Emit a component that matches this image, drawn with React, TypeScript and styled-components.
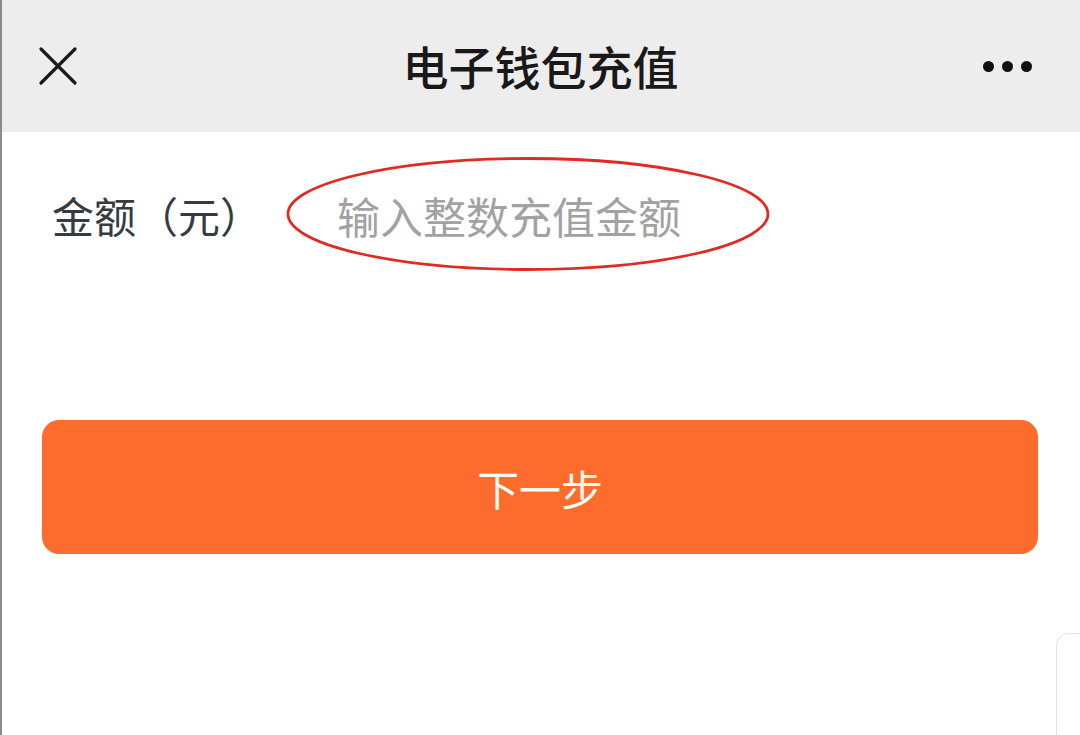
import React from "react";
import styled, { createGlobalStyle } from "styled-components";

const GlobalStyle = createGlobalStyle`
  html, body {
    margin: 0;
    padding: 0;
    background: #ffffff;
  }
  body {
    font-family: "Noto Sans CJK SC", "Noto Sans", sans-serif;
  }
  * { box-sizing: border-box; }
`;

const Page = styled.div`
  position: relative;
  width: 1080px;
  height: 735px;
  overflow: hidden;
  background: #ffffff;
  border-left: 2px solid #8c8c8c;
`;

const Header = styled.header`
  height: 132px;
  background: #ededed;
  display: flex;
  align-items: center;
  padding: 0 48px 0 34px;
`;

const IconButton = styled.button`
  width: 44px;
  height: 44px;
  padding: 0;
  border: none;
  background: transparent;
  display: flex;
  align-items: center;
  justify-content: center;
  cursor: pointer;
`;

const Title = styled.h1`
  flex: 1;
  margin: 0;
  text-align: center;
  font-size: 46px;
  line-height: 1.2;
  font-weight: 500;
  color: #191919;
  letter-spacing: 0;
  padding-left: 18px;
`;

const Dots = styled.div`
  display: flex;
  gap: 8px;
  align-items: center;
`;

const Dot = styled.span`
  width: 11px;
  height: 11px;
  border-radius: 50%;
  background: #111111;
`;

const Row = styled.div`
  height: 164px;
  display: flex;
  align-items: center;
  padding-left: 50px;
  padding-top: 2px;
`;

const Label = styled.label`
  width: 285px;
  font-size: 42px;
  line-height: 60px;
  color: #363b42;
  white-space: nowrap;
`;

const InputWrap = styled.div`
  position: relative;
  height: 60px;
  flex: 1;
`;

const AmountInput = styled.input`
  width: 100%;
  height: 60px;
  border: none;
  outline: none;
  background: transparent;
  padding: 0;
  font-family: "Noto Sans CJK SC", "Noto Sans", sans-serif;
  font-size: 43px;
  line-height: 60px;
  color: #333;
  &::placeholder {
    color: #a2a2a2;
  }
`;

const Annotation = styled.svg`
  position: absolute;
  left: -52px;
  top: -29px;
  pointer-events: none;
`;

const NextButton = styled.button`
  display: flex;
  align-items: center;
  justify-content: center;
  margin: 124px 40px 0 40px;
  width: 996px;
  height: 134px;
  border: none;
  border-radius: 17px;
  background: #fe6c2d;
  color: #fffaf2;
  font-family: "Noto Sans CJK SC", "Noto Sans", sans-serif;
  font-size: 42px;
  font-weight: 400;
  cursor: pointer;
`;

const FloatingCard = styled.div`
  position: absolute;
  left: 1054px;
  top: 633px;
  width: 60px;
  height: 200px;
  border: 1.5px solid #e4e4e4;
  border-radius: 12px;
  background: #ffffff;
`;

export default function App() {
  return (
    <>
      <GlobalStyle />
      <Page>
        <Header>
          <IconButton aria-label="关闭">
            <svg width="40" height="40" viewBox="0 0 40 40">
              <path d="M3 3 L37 37 M37 3 L3 37" stroke="#1a1a1a" strokeWidth="3.2" strokeLinecap="round" />
            </svg>
          </IconButton>
          <Title>电子钱包充值</Title>
          <Dots>
            <Dot />
            <Dot />
            <Dot />
          </Dots>
        </Header>
        <Row>
          <Label>金额（元）</Label>
          <InputWrap>
            <AmountInput placeholder="输入整数充值金额" />
            <Annotation width="486" height="116" viewBox="0 0 486 116">
              <ellipse cx="243" cy="58" rx="240" ry="55.5" fill="none" stroke="#e02a22" strokeWidth="2.8" />
            </Annotation>
          </InputWrap>
        </Row>
        <NextButton>下一步</NextButton>
        <FloatingCard />
      </Page>
    </>
  );
}
